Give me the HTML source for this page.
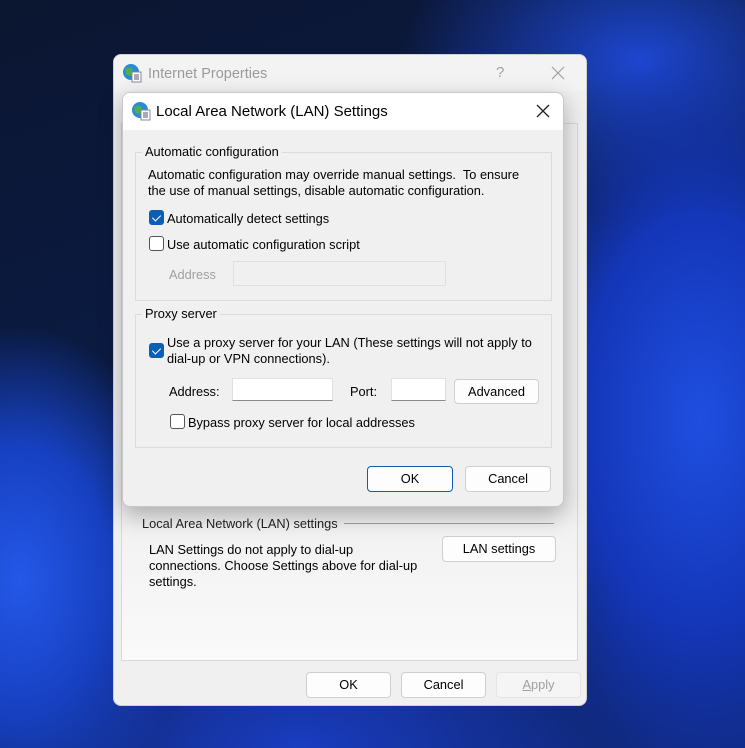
<!DOCTYPE html>
<html><head><style>
*{box-sizing:border-box;margin:0;padding:0}
body{width:745px;height:748px;overflow:hidden;position:relative;font-family:"Liberation Sans",sans-serif;font-size:12.8px;color:#000;
background:
radial-gradient(ellipse 260px 460px at 700px 420px,#1f4fe0 0%,#1436b8 45%,rgba(10,30,110,0) 80%),
radial-gradient(ellipse 200px 300px at 20px 580px,#2458e8 0%,#1740c0 45%,rgba(10,30,110,0) 85%),
radial-gradient(ellipse 300px 200px at 640px 60px,#1d46d0 0%,rgba(20,50,160,0) 80%),
radial-gradient(ellipse 400px 200px at 300px 748px,#1a3cc0 0%,rgba(20,50,160,0) 80%),
linear-gradient(160deg,#0b1630 0%,#0b1a42 40%,#102a80 100%);}
.abs{position:absolute}
.win{left:113px;top:54px;width:474px;height:652px;background:#f0f0f0;border:1px solid #d0d0d0;border-radius:8px;overflow:hidden}
.btn{position:absolute;height:26px;background:#fdfdfd;border:1px solid #cfcfcf;border-radius:4px;text-align:center;line-height:24px;font-size:12.8px}
.dlg{left:122px;top:92px;width:442px;height:415px;background:#f0f0f0;border:1px solid #c8c8c8;border-radius:8px;overflow:hidden;box-shadow:0 8px 24px rgba(0,0,0,.3)}
.grp{position:absolute;border:1px solid #dcdcdc}
.lg{position:absolute;background:#f0f0f0;padding:0 3px;top:-9px;left:6px}
.cb{position:absolute;width:15px;height:15px;border:1px solid #555;border-radius:3px;background:#fff}
.cb.on{background:#0a5fb4;border-color:#0a5fb4}
.cb.on:after{content:"";position:absolute;left:4px;top:2px;width:4px;height:7px;border:solid #fff;border-width:0 1.3px 1.3px 0;transform:rotate(45deg)}
.inp{position:absolute;background:#fff;border:1px solid #e0e0e0;border-bottom-color:#8a8a8a;height:23px}
</style></head><body>
<div class="abs win">
  <div class="abs" style="left:0;top:0;width:474px;height:36px;background:#f3f3f3"></div>
  <svg class="abs" style="left:8px;top:8px" width="20" height="20"><circle cx="9" cy="9" r="8" fill="#2a8ad8"/><path d="M3 6q4-3 8 0q-2 3 0 6q-4 2-7-1z" fill="#4caf50"/><rect x="10" y="9" width="9" height="10" fill="#fff" stroke="#889"/><path d="M12 12h5M12 14h5M12 16h5" stroke="#557" stroke-width="1"/></svg>
  <div class="abs" style="left:34px;top:11px;font-size:14.5px;color:#9a9a9a">Internet Properties</div>
  <div class="abs" style="left:382px;top:9px;font-size:15px;color:#a0a0a0">?</div>
  <svg class="abs" style="left:437px;top:11px" width="14" height="14"><path d="M1 1L13 13M13 1L1 13" stroke="#a0a0a0" stroke-width="1.2"/></svg>
  <div class="abs" style="left:7px;top:68px;width:457px;height:538px;background:linear-gradient(#f0f0f0 0%,#f0f0f0 70%,#fafafa 100%);border:1px solid #d8d8d8"></div>
  <div class="abs" style="left:28px;top:461px;color:#222">Local Area Network (LAN) settings</div>
  <div class="abs" style="left:230px;top:468px;width:210px;height:1px;background:#a0a0a0"></div>
  <div class="abs" style="left:35px;top:487px;line-height:16px">LAN Settings do not apply to dial-up<br>connections. Choose Settings above for dial-up<br>settings.</div>
  <div class="btn" style="left:328px;top:481px;width:114px">LAN settings</div>
  <div class="btn" style="left:192px;top:617px;width:85px">OK</div>
  <div class="btn" style="left:287px;top:617px;width:85px">Cancel</div>
  <div class="btn" style="left:382px;top:617px;width:85px;color:#a0a0a0;background:#f5f5f5;border-color:#e4e4e4"><u>A</u>pply</div>
</div>
<div class="abs dlg">
  <div class="abs" style="left:0;top:0;width:442px;height:37px;background:#fff"></div>
  <svg class="abs" style="left:8px;top:8px" width="20" height="20"><circle cx="9" cy="9" r="8" fill="#2a8ad8"/><path d="M3 6q4-3 8 0q-2 3 0 6q-4 2-7-1z" fill="#4caf50"/><rect x="10" y="9" width="9" height="10" fill="#fff" stroke="#889"/><path d="M12 12h5M12 14h5M12 16h5" stroke="#557" stroke-width="1"/></svg>
  <div class="abs" style="left:33px;top:10px;font-size:15px">Local Area Network (LAN) Settings</div>
  <svg class="abs" style="left:413px;top:11px" width="14" height="14"><path d="M1 1L13 13M13 1L1 13" stroke="#222" stroke-width="1.3"/></svg>
  <div class="grp" style="left:12px;top:59px;width:417px;height:149px">
    <div class="lg">Automatic configuration</div>
    <div class="abs" style="left:12px;top:14px;line-height:16px;white-space:nowrap">Automatic configuration may override manual settings.&nbsp; To ensure<br>the use of manual settings, disable automatic configuration.</div>
    <div class="cb on" style="left:13px;top:57px"></div>
    <div class="abs" style="left:31px;top:58px">Automatically detect settings</div>
    <div class="cb" style="left:13px;top:83px"></div>
    <div class="abs" style="left:31px;top:84px">Use automatic configuration script</div>
    <div class="abs" style="left:33px;top:114px;color:#a0a0a0">Address</div>
    <div class="abs" style="left:97px;top:108px;width:213px;height:25px;border:1px solid #e0e0e0;background:#f0f0f0"></div>
  </div>
  <div class="grp" style="left:12px;top:221px;width:417px;height:134px">
    <div class="lg">Proxy server</div>
    <div class="cb on" style="left:13px;top:28px"></div>
    <div class="abs" style="left:31px;top:20px;line-height:16px;white-space:nowrap">Use a proxy server for your LAN (These settings will not apply to<br>dial-up or VPN connections).</div>
    <div class="abs" style="left:33px;top:69px">Address:</div>
    <div class="inp" style="left:96px;top:63px;width:101px"></div>
    <div class="abs" style="left:214px;top:69px">Port:</div>
    <div class="inp" style="left:255px;top:63px;width:55px"></div>
    <div class="btn" style="left:318px;top:64px;width:85px;height:25px">Advanced</div>
    <div class="cb" style="left:34px;top:99px"></div>
    <div class="abs" style="left:52px;top:100px">Bypass proxy server for local addresses</div>
  </div>
  <div class="btn" style="left:244px;top:373px;width:86px;border:1px solid #0a5fb4">OK</div>
  <div class="btn" style="left:342px;top:373px;width:86px">Cancel</div>
</div>
</body></html>
